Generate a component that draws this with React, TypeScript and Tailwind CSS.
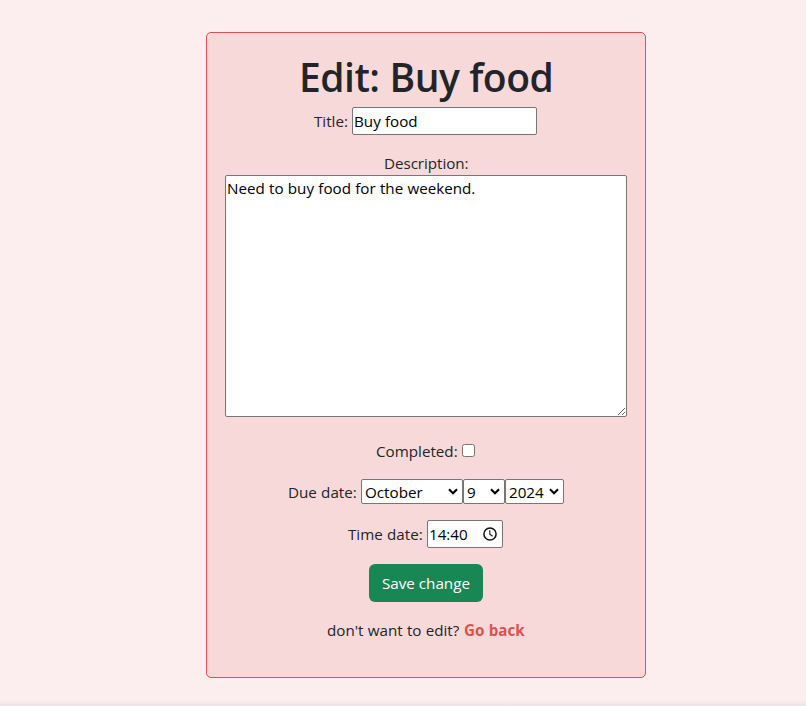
import React from "react";

const field =
  "appearance-none rounded-[2px] border border-[#767676] bg-white text-black outline-none [word-spacing:inherit]";

function Label({ children, className }: { children: React.ReactNode; className: string }) {
  return <span className={`block shrink-0 whitespace-nowrap leading-6 ${className}`}>{children}</span>;
}

function Picker({ options, className }: { options: string[]; className: string }) {
  return (
    <div className={`relative h-[25px] ${className}`}>
      <select className={`${field} block h-full w-full pt-[1px] pb-0 pl-[3px]`}>
        {options.map((o) => (
          <option key={o}>{o}</option>
        ))}
      </select>
      <svg
        className="pointer-events-none absolute top-[9px] right-[5px] h-[8px] w-[10px]"
        viewBox="0 0 10 8"
        fill="none"
        stroke="black"
        strokeWidth="2.1"
      >
        <path d="M1 1.3 L5 5.2 L9 1.3" />
      </svg>
    </div>
  );
}

export default function App() {
  return (
    <div className="flex h-[706px] w-full flex-col overflow-hidden bg-[#fceeee] pt-8 font-['Open_Sans','Noto_Sans',sans-serif] text-[15.2px] text-[#212529] [word-spacing:0.3px]">
      <main className="ml-[206px] flex h-[646px] w-[440px] shrink-0 flex-col rounded-[5px] border border-[#d9534f] bg-[#f7d9da]">
        <h1 className="mt-[20px] ml-[92px] h-12 text-[39px] leading-12 font-semibold whitespace-nowrap tracking-[-0.5px]">
          Edit: Buy food
        </h1>
        <div className="mt-[6px] ml-[107px] flex h-[28px] items-center">
          <Label className="w-[38px]">Title:</Label>
          <input className={`${field} h-[28px] w-[185px] px-[1px]`} defaultValue="Buy food" />
        </div>
        <Label className="mt-[16px] ml-[177px] h-6 tracking-[-0.05px]">Description:</Label>
        <textarea
          className={`${field} ml-[18px] block h-[242px] w-[402px] resize px-[1px] pt-0 leading-6`}
          defaultValue="Need to buy food for the weekend."
        />
        <div className="mt-[22px] ml-[169px] flex h-6 items-center">
          <Label className="w-[86px]">Completed:</Label>
          <input
            type="checkbox"
            className="mb-[2px] h-[13px] w-[13px] appearance-none rounded-[2.5px] border border-[#767676] bg-white"
          />
        </div>
        <div className="mt-[16px] ml-[81px] flex h-[25px] items-center">
          <Label className="w-[73px]">Due date:</Label>
          <Picker options={["October", "November", "December"]} className="w-[102px]" />
          <Picker options={["9", "10", "11"]} className="w-[42px]" />
          <Picker options={["2024", "2025"]} className="w-[59px]" />
        </div>
        <div className="mt-[16px] ml-[141px] flex h-[28px] items-center">
          <Label className="w-[79px]">Time date:</Label>
          <div className={`${field} flex h-[28px] w-[76px] items-center pl-[1px]`}>
            <span className="w-[54px]">14:40</span>
            <svg className="h-[14px] w-[14px]" viewBox="0 0 14 14" fill="none" stroke="#111">
              <circle cx="7" cy="7" r="6.1" strokeWidth="1.5" />
              <path d="M6.8 3.3 V7.3 L9.6 9.2" strokeWidth="1.1" />
            </svg>
          </div>
        </div>
        <button className="mt-[16px] ml-[162px] h-[38px] w-[114px] rounded-[6px] bg-[#198754] whitespace-nowrap text-white">
          Save change
        </button>
        <p className="mt-[16px] ml-[120px] flex h-6 leading-6 whitespace-nowrap">
          <span className="w-[137px]">don't want to edit?</span>
          <a href="#" className="font-bold text-[#d9534f]">
            Go back
          </a>
        </p>
      </main>
      <div className="mt-auto h-[6px] shrink-0 bg-linear-to-b from-[#fceeee] to-[#efe2e3]" />
    </div>
  );
}
